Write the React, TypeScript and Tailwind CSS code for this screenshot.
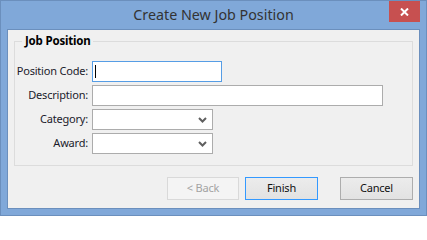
import { useState } from 'react';

const ui = { fontFamily: '"Noto Sans", "Open Sans", Arial, sans-serif' };

function Chevron() {
  return (
    <svg width="9" height="6" viewBox="0 0 9 6" className="shrink-0">
      <path d="M1 1 L4.5 4.5 L8 1" fill="none" stroke="#5f5f5f" strokeWidth="2" />
    </svg>
  );
}

function Select({ width }: { width: string }) {
  return (
    <div className={`${width} h-[21px] flex items-center justify-end pr-[5px] bg-white border border-[#acacac]`}>
      <Chevron />
    </div>
  );
}

export default function App() {
  const [code, setCode] = useState('');
  const [description, setDescription] = useState('');

  return (
    <div className="relative w-[427px] h-[216px] flex flex-col bg-[#80a8d9] border border-[#6b8fbd] px-[6px] pb-[6px]" style={ui}>
      {/* title bar */}
      <div className="h-[28px] flex items-center justify-center pb-[1px] text-[14.3px] text-[#333333]">
        Create New Job Position
      </div>
      <button className="absolute top-0 left-[388px] w-[31px] h-[21px] flex items-center justify-center bg-[#c75050]">
        <svg width="9" height="8" viewBox="0 0 9 8">
          <path d="M1 0.5 L8 7.5 M8 0.5 L1 7.5" stroke="#ffffff" strokeWidth="2" />
        </svg>
      </button>

      {/* client area */}
      <div className="flex-1 flex flex-col bg-[#f0f0f0] border border-[#6b8fbd] px-[6px] pt-[3px]">
        <fieldset className="h-[133px] border border-[#dcdcdc] pt-[12px]">
          <legend className="ml-[7px] px-[3px] text-[11.5px] font-bold text-[#000000] leading-[16px] tracking-[-0.2px]">
            Job Position
          </legend>
          <div className="grid grid-cols-[73px_1fr] gap-x-[4px] gap-y-[3px] items-center text-[11px] tracking-[-0.2px] text-[#1b1b2b] whitespace-nowrap">
            <span className="text-right">Position Code:</span>
            <div className="relative w-[130px] h-[21px]">
              <input
                value={code}
                onChange={(e) => setCode(e.target.value)}
                className="w-full h-full bg-white border border-[#569de5] outline-none px-[3px] text-[12px] caret-transparent"
              />
              {code === '' && <span className="absolute left-[3px] top-[4px] w-px h-[13px] bg-black" />}
            </div>
            <span className="text-right">Description:</span>
            <input
              value={description}
              onChange={(e) => setDescription(e.target.value)}
              className="w-[291px] h-[21px] bg-white border border-[#acacac] outline-none px-[3px] text-[12px]"
            />
            <span className="text-right">Category:</span>
            <Select width="w-[121px]" />
            <span className="text-right">Award:</span>
            <Select width="w-[121px]" />
          </div>
        </fieldset>

        <div className="flex justify-end items-center mt-[11px] text-[11px] tracking-[-0.2px]">
          <button
            disabled
            className="w-[72px] h-[23px] border border-[#d9d9d9] bg-[#f4f4f4] text-[#a3a3a3]"
          >
            &lt; Back
          </button>
          <button className="w-[73px] h-[23px] ml-[6px] border border-[#3399ff] bg-gradient-to-b from-[#ececec] to-[#e2e2e2] text-[#111111]">
            Finish
          </button>
          <button className="w-[73px] h-[23px] ml-[22px] border border-[#adadad] bg-gradient-to-b from-[#ececec] to-[#e2e2e2] text-[#111111]">
            Cancel
          </button>
        </div>
      </div>
    </div>
  );
}
